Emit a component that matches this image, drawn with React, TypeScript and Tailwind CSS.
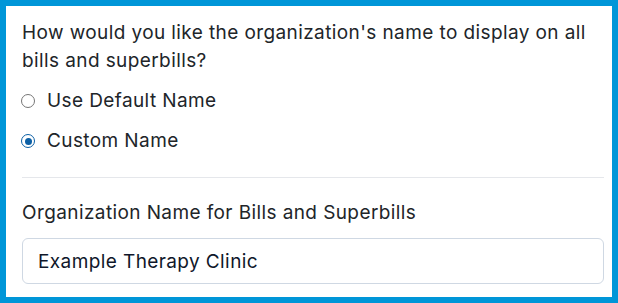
import { useState } from 'react';

export default function App() {
  const [choice, setChoice] = useState<'default' | 'custom'>('custom');
  const [name, setName] = useState('Example Therapy Clinic');

  const options = [
    { id: 'default' as const, label: 'Use Default Name' },
    { id: 'custom' as const, label: 'Custom Name' },
  ];

  return (
    <div
      className="w-[618px] h-[303px] bg-[#0096d8] p-[6px]"
      style={{ fontFamily: 'Inter, "Noto Sans", sans-serif' }}
    >
      <div className="h-full bg-white pl-4 pr-2 pt-[13px] text-[19px] leading-[28px] tracking-[0.4px] text-[#212529]">
        {/* Question */}
        <p>How would you like the organization's name to display on all bills and superbills?</p>

        {/* Radio options */}
        <div className="mt-3 flex flex-col gap-3">
          {options.map((opt) => {
            const checked = choice === opt.id;
            return (
              <label key={opt.id} className="flex items-center gap-[12px] cursor-pointer">
                <span
                  onClick={() => setChoice(opt.id)}
                  className={
                    checked
                      ? 'ml-[-1px] flex h-[14px] w-[14px] items-center justify-center rounded-full border-[1.5px] border-[#0b5fa5]'
                      : 'ml-[-1px] h-[14px] w-[14px] rounded-full border border-[#767676]'
                  }
                >
                  {checked && <span className="h-[7px] w-[7px] rounded-full bg-[#0b5fa5]" />}
                </span>
                <span onClick={() => setChoice(opt.id)}>{opt.label}</span>
              </label>
            );
          })}
        </div>

        <hr className="mt-[22px] border-[#e5e7eb]" />

        {/* Name field */}
        <div className="mt-[21px]">
          <div>Organization Name for Bills and Superbills</div>
          <input
            value={name}
            onChange={(e) => setName(e.target.value)}
            className="mt-[11px] h-[46px] w-full rounded-md border border-[#cfd8e3] px-[15px] text-[19px] tracking-[0.4px] text-[#0f172a] outline-none"
          />
        </div>
      </div>
    </div>
  );
}
